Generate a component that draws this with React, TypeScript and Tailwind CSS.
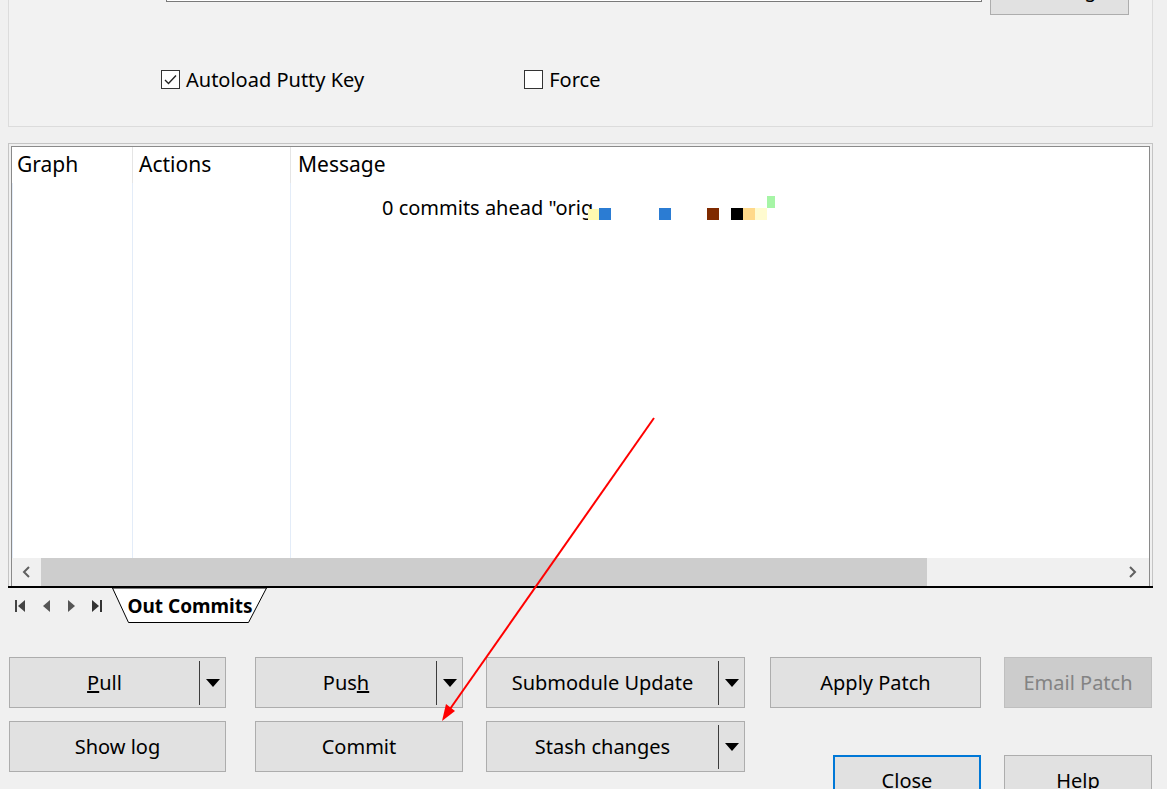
import React from "react";

const F = { fontFamily: '"Noto Sans", "Open Sans", sans-serif' };

function Arrow() {
  return (
    <svg width="16" height="10" viewBox="0 0 16 10">
      <polygon points="1,1 15,1 8,9" fill="#000" />
    </svg>
  );
}

function Btn({
  w,
  children,
  split,
  splitW = 26,
  disabled,
  focus,
}: {
  w: number;
  children: React.ReactNode;
  split?: boolean;
  splitW?: number;
  disabled?: boolean;
  focus?: boolean;
}) {
  const base = disabled
    ? "bg-[#cccccc] border border-[#bfbfbf] text-[#838383]"
    : focus
    ? "bg-[#e1e1e1] border-2 border-[#0078d7] text-black"
    : "bg-[#e1e1e1] border border-[#adadad] text-black";
  return (
    <div
      className={`${base} h-[51px] flex items-center text-[20px] shrink-0`}
      style={{ width: w }}
    >
      <div className="flex-1 flex items-center justify-center">{children}</div>
      {split && (
        <div className="flex items-center h-full" style={{ width: splitW }}>
          <div className="w-[1px] h-[44px] bg-[#3c3c3c]" />
          <div className="flex-1 flex items-center justify-center">
            <Arrow />
          </div>
        </div>
      )}
    </div>
  );
}

function Check({ checked }: { checked?: boolean }) {
  return (
    <div className="w-[19px] h-[19px] border border-[#333] bg-white flex items-center justify-center">
      {checked && (
        <svg width="13" height="11" viewBox="0 0 13 11">
          <polyline points="1,6 4.5,9.5 12,1.5" fill="none" stroke="#222" strokeWidth="1.4" />
        </svg>
      )}
    </div>
  );
}

function NavIcons() {
  return (
    <div className="flex items-center h-[36px] pl-[15px]">
      <svg width="100" height="16" viewBox="0 0 100 16">
        <rect x="0" y="2" width="2" height="12" fill="#444" />
        <polygon points="10,2 3,8 10,14" fill="#444" />
        <polygon points="35,2 28,8 35,14" fill="#555" />
        <polygon points="53,2 60,8 53,14" fill="#555" />
        <polygon points="77,2 84,8 77,14" fill="#333" />
        <rect x="85" y="2" width="2" height="12" fill="#333" />
      </svg>
    </div>
  );
}

export default function App() {
  const squares: [number, number, number, number, string][] = [
    [588, 209, 12, 11, "#fffab0"],
    [599, 208, 12, 12, "#2b7cd3"],
    [659, 208, 12, 12, "#2b7cd3"],
    [707, 208, 12, 12, "#7f2a00"],
    [731, 208, 12, 12, "#000000"],
    [743, 208, 12, 12, "#ffd98a"],
    [755, 208, 12, 12, "#fffbd0"],
    [767, 196, 8, 12, "#a6f5a6"],
  ];
  return (
    <div
      className="relative w-[1167px] h-[789px] overflow-hidden bg-[#f0f0f0] text-black"
      style={F}
    >
      {/* top group box */}
      <div className="ml-[8px] w-[1145px] h-[127px] border-x border-b border-[#dcdcdc] bg-[#f2f2f2]">
        <div className="flex items-start">
          <div className="ml-[157px] w-[816px] h-[2px] bg-white border-x border-b border-[#7a7a7a]" />
          <div className="ml-[8px] w-[139px] h-[15px] bg-[#e1e1e1] border-x border-b border-[#adadad] overflow-hidden flex justify-center">
            <span className="text-[20px] leading-[27px] mt-[-24px] pl-[20px]">Manage</span>
          </div>
        </div>
        <div className="flex items-center mt-[51px] text-[20px] leading-[27px]">
          <div className="ml-[152px] flex items-center gap-[6px]">
            <Check checked />
            <span>Autoload Putty Key</span>
          </div>
          <div className="ml-[160px] flex items-center gap-[6px]">
            <Check />
            <span>Force</span>
          </div>
        </div>
      </div>

      {/* list */}
      <div className="ml-[8px] mt-[16px] w-[1145px] border-x border-t border-[#c4c4c4] pt-[2px] px-[2px] bg-[#f0f0f0]">
        <div className="border-x border-t border-[#8a8a8a] bg-white h-[440px] flex flex-col">
          <div className="flex h-[36px] text-[21px] items-center">
            <div className="w-[121px] h-full border-r border-[#e5e5e5] pl-[5px] flex items-center">Graph</div>
            <div className="w-[158px] h-full border-r border-[#e5e5e5] pl-[6px] flex items-center">Actions</div>
            <div className="flex-1 h-full pl-[7px] flex items-center">Message</div>
          </div>
          <div className="flex flex-1">
            <div className="w-[121px] border-l border-r border-[#e3ecf8]" />
            <div className="w-[158px] border-r border-[#e3ecf8]" />
            <div className="flex-1 relative">
              <div className="pl-[91px] pt-[11px] text-[20px] leading-[27px]">0 commits ahead "orig</div>
            </div>
          </div>
          <div className="h-[28px] bg-[#f0f0f0] flex items-center">
            <div className="w-[29px] h-full flex items-center justify-center">
              <svg width="10" height="12" viewBox="0 0 10 12">
                <polyline points="7,1 2,6 7,11" fill="none" stroke="#606060" strokeWidth="2" />
              </svg>
            </div>
            <div className="w-[886px] h-full bg-[#cdcdcd]" />
            <div className="flex-1" />
            <div className="w-[32px] h-full flex items-center justify-center pr-[3px]">
              <svg width="10" height="12" viewBox="0 0 10 12">
                <polyline points="3,1 8,6 3,11" fill="none" stroke="#606060" strokeWidth="2" />
              </svg>
            </div>
          </div>
        </div>
      </div>
      <div className="ml-[8px] w-[1145px] h-[2px] bg-black" />

      {/* tabs */}
      <div className="flex items-start h-[37px]">
        <NavIcons />
        <div className="relative ml-[-3px] w-[156px] h-[36px] flex items-center justify-center">
          <svg className="absolute inset-0" width="156" height="36" viewBox="0 0 156 36">
            <polygon points="0.5,0 154.5,0 136.5,34.5 16.5,34.5" fill="#fff" stroke="#000" strokeWidth="1" />
          </svg>
          <span className="relative font-bold text-[19px] leading-[24px] mt-[-1px]">Out Commits</span>
        </div>
      </div>

      {/* buttons row 1 */}
      <div className="flex mt-[32px] pl-[9px]">
        <Btn w={217} split>
          <span><span className="underline">P</span>ull</span>
        </Btn>
        <div className="ml-[29px]">
          <Btn w={208} split>
            <span>Pus<span className="underline">h</span></span>
          </Btn>
        </div>
        <div className="ml-[23px]">
          <Btn w={259} split>Submodule Update</Btn>
        </div>
        <div className="ml-[25px]">
          <Btn w={211}>Apply Patch</Btn>
        </div>
        <div className="ml-[23px]">
          <Btn w={148} disabled>Email Patch</Btn>
        </div>
      </div>

      {/* row 2 */}
      <div className="flex items-start mt-[13px] pl-[9px]">
        <div className="flex flex-col">
          <div className="flex">
            <Btn w={217}>Show log</Btn>
            <div className="ml-[29px]">
              <Btn w={208}>Commit</Btn>
            </div>
            <div className="ml-[23px]">
              <Btn w={259} split>Stash changes</Btn>
            </div>
          </div>
          <div className="mt-[14px] pl-[84px] text-[20px] leading-[27px]">Fetch and update all submodules after the pull</div>
        </div>
        <div className="ml-[88px] mt-[34px]">
          <Btn w={148} focus>Close</Btn>
        </div>
        <div className="ml-[23px] mt-[34px]">
          <Btn w={148}>Help</Btn>
        </div>
      </div>

      {/* censored pixels */}
      {squares.map(([x, y, w, h, c], i) => (
        <div key={i} className="absolute" style={{ left: x, top: y, width: w, height: h, background: c }} />
      ))}

      {/* red annotation arrow */}
      <svg className="absolute inset-0 pointer-events-none" width="1167" height="789" viewBox="0 0 1167 789">
        <line x1="654" y1="418" x2="450" y2="709" stroke="#f00" strokeWidth="2" />
        <polygon points="442,721 455,711 446,704" fill="#f00" />
      </svg>
    </div>
  );
}
